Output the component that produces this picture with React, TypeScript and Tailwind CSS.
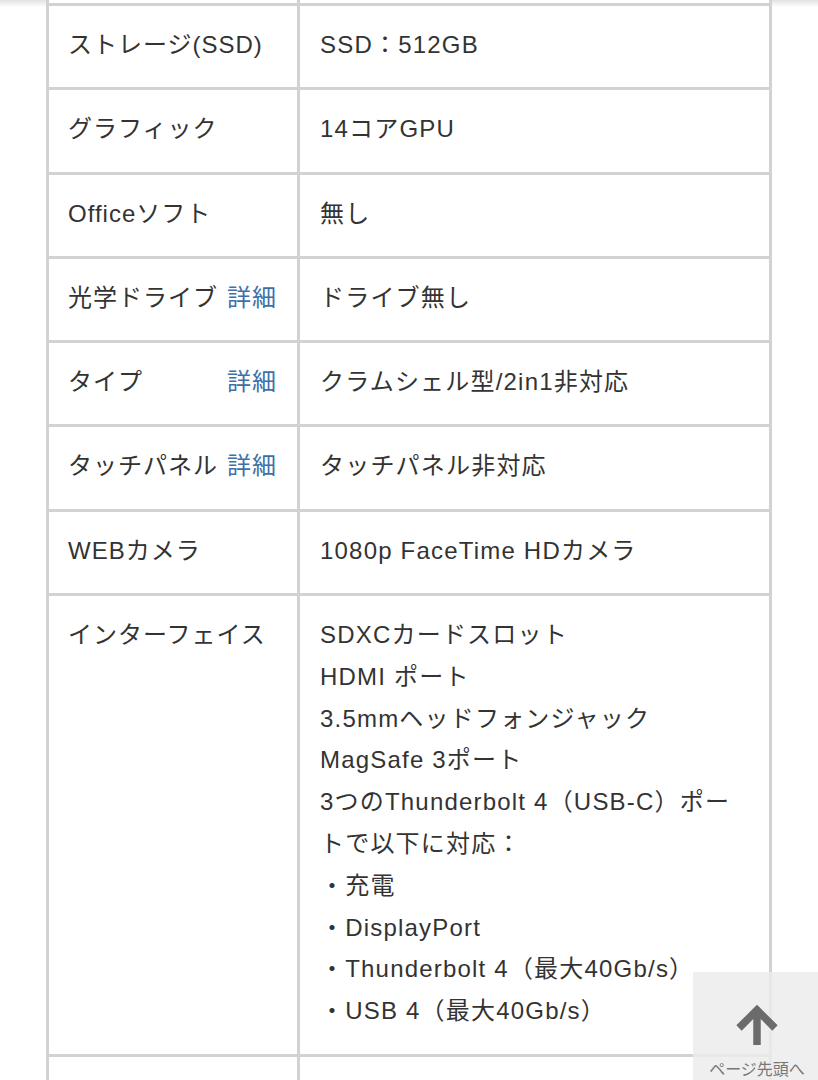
const rows: { label: string; link?: boolean; value: string[] }[] = [
  { label: "ストレージ(SSD)", value: ["SSD：512GB"] },
  { label: "グラフィック", value: ["14コアGPU"] },
  { label: "Officeソフト", value: ["無し"] },
  { label: "光学ドライブ", link: true, value: ["ドライブ無し"] },
  { label: "タイプ", link: true, value: ["クラムシェル型/2in1非対応"] },
  { label: "タッチパネル", link: true, value: ["タッチパネル非対応"] },
  { label: "WEBカメラ", value: ["1080p FaceTime HDカメラ"] },
  {
    label: "インターフェイス",
    value: [
      "SDXCカードスロット",
      "HDMI ポート",
      "3.5mmヘッドフォンジャック",
      "MagSafe 3ポート",
      "3つのThunderbolt 4（USB-C）ポー",
      "トで以下に対応：",
      "・充電",
      "・DisplayPort",
      "・Thunderbolt 4（最大40Gb/s）",
      "・USB 4（最大40Gb/s）",
    ],
  },
]

function ArrowUp() {
  return (
    <svg width="44" height="42" viewBox="0 0 44 42" fill="none">
      <path d="M22 40V6" stroke="#6b6b6b" strokeWidth="7.5" />
      <path d="M4 23L22 5L40 23" stroke="#6b6b6b" strokeWidth="7.5" strokeLinejoin="miter" />
    </svg>
  )
}

export default function App() {
  return (
    <div
      className="relative w-[818px] h-[1080px] overflow-hidden bg-white text-[#333]"
      style={{ fontFamily: '"Liberation Sans", "Noto Sans CJK JP", sans-serif' }}
    >
      <div className="absolute inset-x-0 top-0 h-[7px] bg-gradient-to-b from-[#e2e2e2] to-white" />

      <div className="relative mx-[46px] -mt-[78px]">
        <table className="w-full border-collapse table-fixed text-[24px] leading-[41.8px] tracking-[1.2px]">
          <colgroup>
            <col className="w-[251px]" />
            <col />
          </colgroup>
          <tbody>
            <tr>
              <td className="h-[81px] bg-white border-[3px] border-[#d2d2d2]" />
              <td className="h-[81px] bg-white border-[3px] border-[#d2d2d2]" />
            </tr>
            {rows.map((row, i) => (
              <tr key={i}>
                <td className="align-top bg-white border-[3px] border-[#d2d2d2] pl-[19px] pr-[20px] pt-[18px] pb-[21.5px]">
                  <div className="flex justify-between whitespace-nowrap">
                    <span className="tracking-[1px]">{row.label}</span>
                    {row.link && <span className="tracking-[1px] text-[#3d70a8]">詳細</span>}
                  </div>
                </td>
                <td className="align-top bg-white border-[3px] border-[#d2d2d2] pl-[20px] pr-[16px] pt-[18px] pb-[21.5px]">
                  {row.value.map((line, j) => (
                    <div key={j} className="whitespace-nowrap">
                      {line}
                    </div>
                  ))}
                </td>
              </tr>
            ))}
            <tr>
              <td className="h-[81px] bg-white border-[3px] border-[#d2d2d2]" />
              <td className="h-[81px] bg-white border-[3px] border-[#d2d2d2]" />
            </tr>
          </tbody>
        </table>
      </div>

      <div className="absolute left-[693px] top-[972px] w-[128px] h-[120px] bg-[#ececec]/85 flex flex-col items-center pt-[33px]">
        <ArrowUp />
        <div className="mt-[13px] text-[16px] leading-[20px] text-[#777] whitespace-nowrap">ページ先頭へ</div>
      </div>
    </div>
  )
}
